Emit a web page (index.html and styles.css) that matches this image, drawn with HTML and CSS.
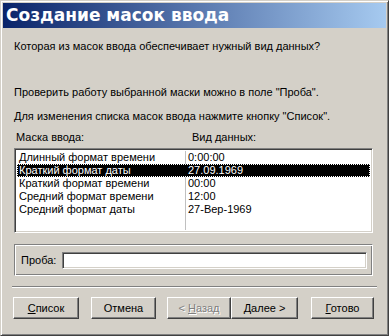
FILE: index.html
```html
<!DOCTYPE html>
<html lang="ru">

<head>
  <meta charset="UTF-8">
  <meta name="viewport" content="width=device-width, initial-scale=1.0">
  <title>Создание масок ввода</title>
  <link rel="stylesheet" href="styles.css">
</head>

<body>
  <div class="window">
    <div class="titlebar">Создание масок ввода</div>

    <div class="content">
      <p class="question">Которая из масок ввода обеспечивает нужный вид данных?</p>
      <p class="hint">Проверить работу выбранной маски можно в поле "Проба".</p>
      <p class="hint2">Для изменения списка масок ввода нажмите кнопку "Список".</p>

      <div class="list-head">
        <span class="col-name">Маска ввода:</span>
        <span class="col-data">Вид данных:</span>
      </div>

      <div class="listbox">
        <div class="row">
          <span class="cell-name">Длинный формат времени</span>
          <span class="cell-data">0:00:00</span>
        </div>
        <div class="row selected">
          <span class="cell-name">Краткий формат даты</span>
          <span class="cell-data">27.09.1969</span>
        </div>
        <div class="row">
          <span class="cell-name">Краткий формат времени</span>
          <span class="cell-data">00:00</span>
        </div>
        <div class="row">
          <span class="cell-name">Средний формат времени</span>
          <span class="cell-data">12:00</span>
        </div>
        <div class="row">
          <span class="cell-name">Средний формат даты</span>
          <span class="cell-data">27-Вер-1969</span>
        </div>
        <div class="row-fill">
          <span class="cell-name"></span>
          <span class="cell-data"></span>
        </div>
      </div>

      <div class="group">
        <label class="probe-label">Проба:</label>
        <div class="probe-input"></div>
      </div>

      <div class="separator"></div>

      <div class="buttons">
        <button class="btn btn-list"><u>С</u>писок</button>
        <button class="btn btn-cancel">Отмена</button>
        <div class="nav">
          <button class="btn btn-back" disabled>&lt; <u>Н</u>азад</button>
          <button class="btn btn-next"><u>Д</u>алее &gt;</button>
        </div>
        <button class="btn btn-done"><u>Г</u>отово</button>
      </div>
    </div>
  </div>
</body>

</html>
```

FILE: styles.css
```css
body {
  margin: 0;
  padding: 0;
  background-color: #d4d0c8;
  font-family: 'Liberation Sans', Arial, sans-serif;
  font-size: 11px;
  color: #000;
}

.window {
  width: 389px;
  height: 336px;
  box-sizing: border-box;
  border: 1px solid;
  border-color: #d4d0c8 #404040 #404040 #d4d0c8;
  box-shadow: inset 1px 1px 0 #fff, inset -1px -1px 0 #808080;
  padding: 2px;
  display: flex;
  flex-direction: column;
}

.titlebar {
  height: 25px;
  line-height: 25px;
  padding-left: 3px;
  background: linear-gradient(to right, #0a246a, #a6caf0);
  color: #fff;
  font-family: 'DejaVu Sans', Verdana, sans-serif;
  font-weight: bold;
  font-size: 17px;
  white-space: nowrap;
}

.content {
  padding: 12px 11px 0 11px;
  display: flex;
  flex-direction: column;
}

p {
  margin: 0;
  line-height: 13px;
  white-space: nowrap;
}

.hint {
  margin-top: 33px;
}

.hint2 {
  margin-top: 11px;
}

.list-head {
  margin-top: 8px;
  height: 13px;
  line-height: 13px;
  display: flex;
}

.col-name {
  width: 174px;
  padding-left: 2px;
}

.col-data {
  padding-left: 2px;
}

.listbox {
  margin-top: 4px;
  width: 359px;
  height: 85px;
  box-sizing: border-box;
  background-color: #fff;
  border: 1px solid;
  border-color: #808080 #fff #fff #808080;
  box-shadow: inset 1px 1px 0 #404040, inset -1px -1px 0 #d4d0c8;
  padding: 2px;
  display: flex;
  flex-direction: column;
}

.row,
.row-fill {
  display: flex;
  height: 13px;
  line-height: 13px;
  white-space: nowrap;
}

.row-fill {
  flex: 1;
}

.cell-name {
  width: 166px;
  padding-left: 2px;
}

.cell-data {
  flex: 1;
  padding-left: 2px;
  border-left: 1px solid #c0c0c0;
}

.selected {
  background-color: #000;
  color: #fff;
  outline: 1px dotted #fff;
  outline-offset: -1px;
}

.selected .cell-data {
  border-left-color: #000;
}

.group {
  margin-top: 11px;
  width: 359px;
  height: 32px;
  box-sizing: border-box;
  border: 1px solid;
  border-color: #808080 #fff #fff #808080;
  box-shadow: inset 1px 1px 0 #fff, inset -1px -1px 0 #808080;
  display: flex;
  align-items: center;
  padding: 0 5px 0 6px;
  gap: 6px;
}

.probe-input {
  flex: 1;
  height: 17px;
  box-sizing: border-box;
  background-color: #fff;
  border: 1px solid;
  border-color: #808080 #fff #fff #808080;
  box-shadow: inset 1px 1px 0 #404040, inset -1px -1px 0 #d4d0c8;
}

.separator {
  margin: 10px -2px 0 -2px;
  border-top: 1px solid #808080;
  border-bottom: 1px solid #fff;
  height: 0;
}

.buttons {
  margin-top: 9px;
  display: flex;
}

.nav {
  display: flex;
  margin-left: 11px;
}

.btn {
  width: 66px;
  height: 22px;
  box-sizing: border-box;
  background-color: #d4d0c8;
  font-family: 'Liberation Sans', Arial, sans-serif;
  font-size: 11px;
  color: #000;
  border: 1px solid;
  border-color: #fff #404040 #404040 #fff;
  box-shadow: inset -1px -1px 0 #808080;
  padding: 0;
  margin: 0;
}

.btn-list {
  margin-left: -1px;
}

.btn-cancel {
  margin-left: 12px;
  width: 65px;
}

.btn-back {
  width: 64px;
  color: #808080;
  text-shadow: 1px 1px 0 #fff;
}

.btn-next {
  width: 67px;
}

.btn-done {
  margin-left: 13px;
  width: 63px;
}
```
